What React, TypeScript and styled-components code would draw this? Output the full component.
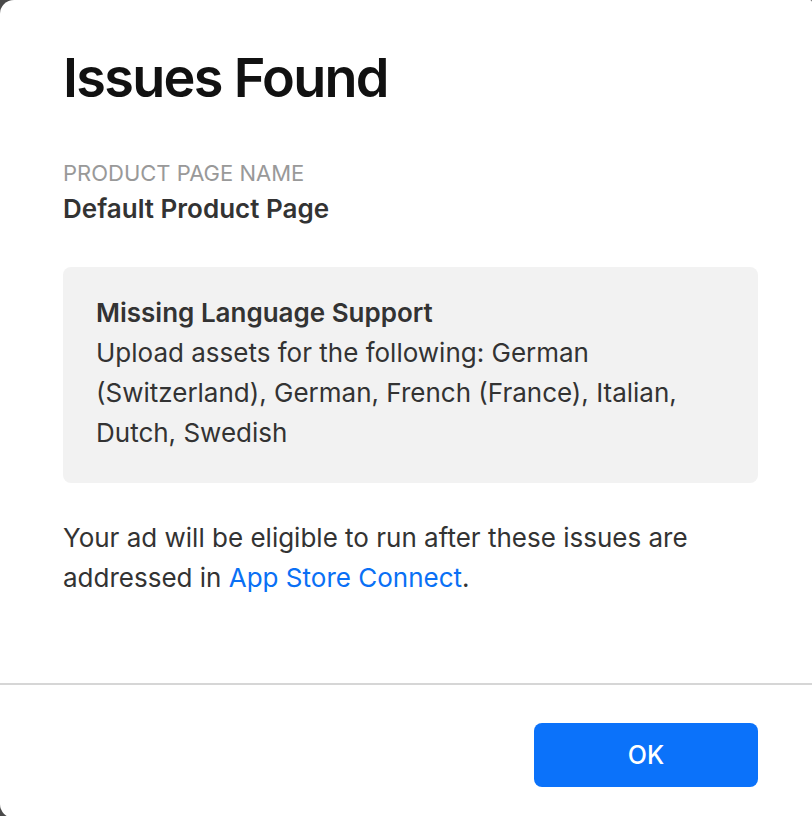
import React from 'react';
import styled, { createGlobalStyle } from 'styled-components';

const GlobalStyle = createGlobalStyle`
  html, body {
    margin: 0;
    padding: 0;
    background: #4a4a4a;
    overflow: hidden;
  }
  body {
    font-family: Inter, "Noto Sans", "Liberation Sans", sans-serif;
    -webkit-font-smoothing: antialiased;
  }
`;

const Dialog = styled.div`
  width: 812px;
  height: 818px;
  background: #fff;
  border-radius: 14px 2px 0 14px;
  display: flex;
  flex-direction: column;
  box-sizing: border-box;
`;

const Body = styled.div`
  flex: 1;
  padding: 46px 54px 0 63px;
  display: flex;
  flex-direction: column;
`;

const Title = styled.h1`
  margin: 0;
  font-size: 54px;
  line-height: 64px;
  font-weight: 600;
  color: #111;
  letter-spacing: -1.7px;
`;

const Field = styled.div`
  margin-top: 49px;
  display: flex;
  flex-direction: column;
  gap: 6px;
`;

const FieldLabel = styled.div`
  font-size: 22px;
  line-height: 28px;
  color: #999;
  text-transform: uppercase;
`;

const FieldValue = styled.div`
  font-size: 26px;
  line-height: 32px;
  font-weight: 600;
  color: #333;
`;

const IssueBox = styled.div`
  margin-top: 42px;
  background: #f2f2f2;
  border-radius: 8px;
  padding: 26px 33px 30px;
  color: #333;
  font-size: 26px;
  line-height: 40px;
`;

const IssueTitle = styled.div`
  font-weight: 600;
`;

const Note = styled.p`
  margin: 35px 0 0;
  font-size: 26px;
  line-height: 40px;
  color: #333;
`;

const Link = styled.a`
  color: #0a70f5;
  text-decoration: none;
`;

const Footer = styled.div`
  border-top: 2px solid #d6d6d6;
  height: 135px;
  flex-shrink: 0;
  display: flex;
  justify-content: flex-end;
  align-items: flex-start;
  padding: 38px 54px 0 0;
  box-sizing: border-box;
`;

const Button = styled.button`
  width: 224px;
  height: 64px;
  border: none;
  border-radius: 8px;
  background: #0b72fa;
  color: #fff;
  font-family: inherit;
  font-size: 25px;
  font-weight: 500;
  cursor: pointer;
`;

const App: React.FC = () => {
  return (
    <>
      <GlobalStyle />
      <Dialog>
        <Body>
          <Title>Issues Found</Title>
          <Field>
            <FieldLabel>Product Page Name</FieldLabel>
            <FieldValue>Default Product Page</FieldValue>
          </Field>
          <IssueBox>
            <IssueTitle>Missing Language Support</IssueTitle>
            <div>
              Upload assets for the following: German (Switzerland), German,
              French (France), Italian, Dutch, Swedish
            </div>
          </IssueBox>
          <Note>
            Your ad will be eligible to run after these issues are addressed in{' '}
            <Link href="#">App Store Connect</Link>.
          </Note>
        </Body>
        <Footer>
          <Button>OK</Button>
        </Footer>
      </Dialog>
    </>
  );
};

export default App;
